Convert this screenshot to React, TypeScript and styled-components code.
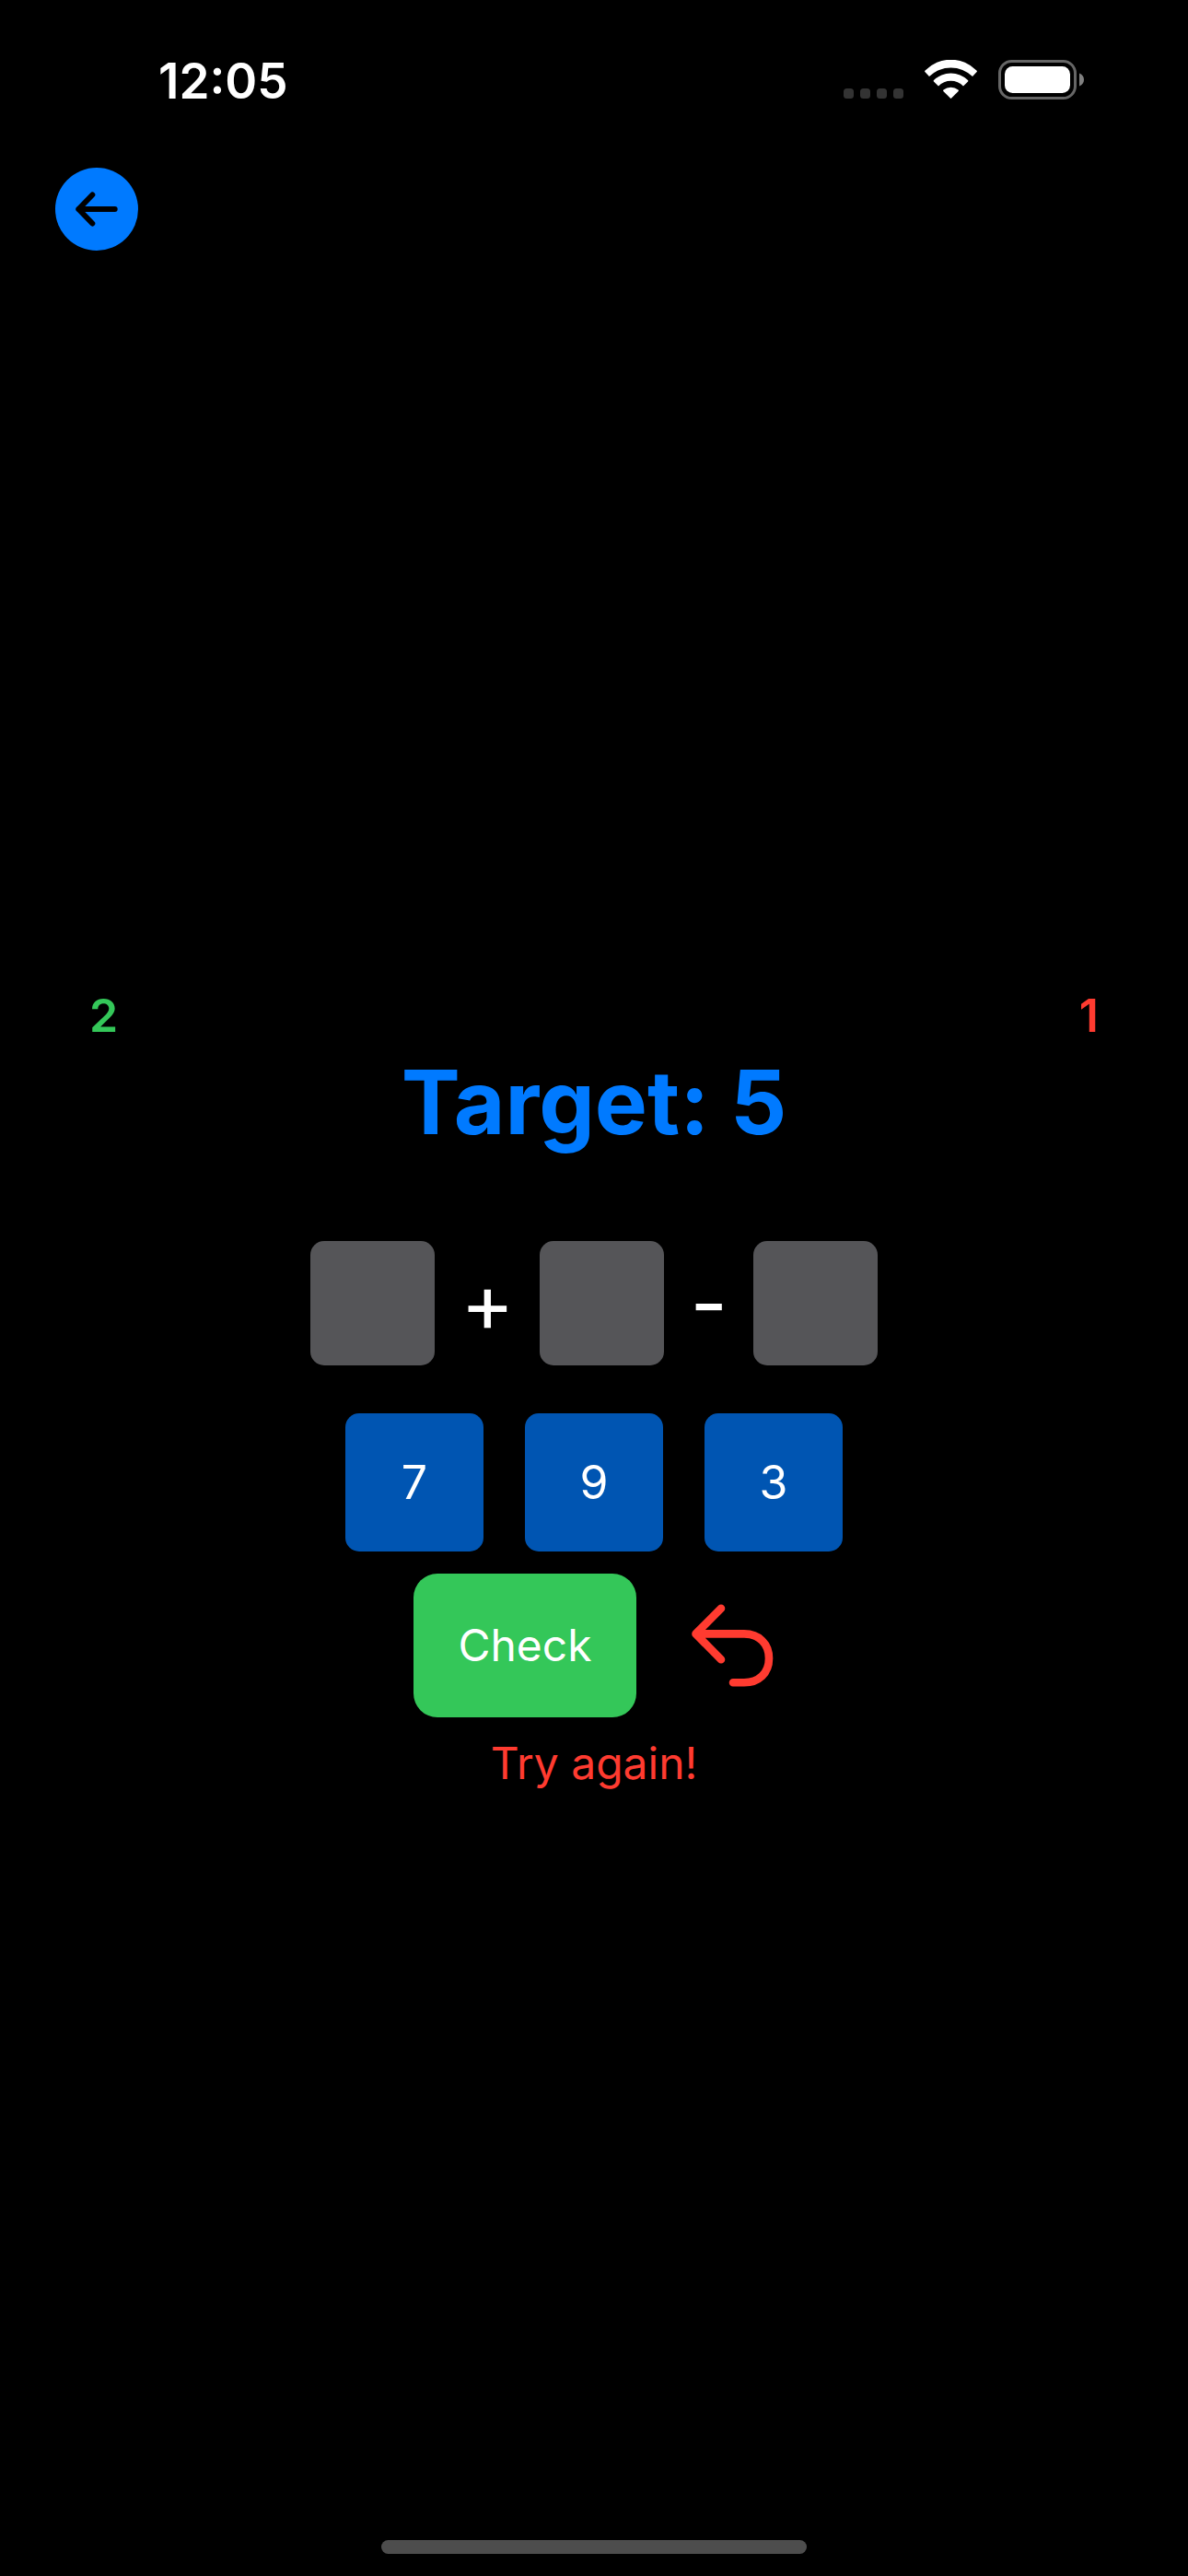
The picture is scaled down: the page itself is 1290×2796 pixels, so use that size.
import React, { useState } from "react";
import styled, { createGlobalStyle } from "styled-components";

const colors = {
  blue: "#007aff",
  green: "#34c759",
  red: "#ff3b30",
  slot: "#555558",
  tile: "#0055b2",
};

const GlobalStyle = createGlobalStyle`
  * {
    box-sizing: border-box;
  }
  body {
    margin: 0;
    background: #000;
    color: #fff;
    font-family: Inter, "Liberation Sans", sans-serif;
    font-size: 50px;
    line-height: 60px;
  }
  button {
    margin: 0;
    padding: 0;
    border: 0;
    background: none;
    color: inherit;
    font: inherit;
    cursor: pointer;
  }
  svg {
    display: block;
  }
`;

const Screen = styled.div`
  display: flex;
  flex-direction: column;
  min-height: 100vh;
`;

const StatusBar = styled.div`
  display: flex;
  align-items: flex-start;
  justify-content: space-between;
  padding: 58px 112px 0 172px;
`;

const Clock = styled.time`
  font-size: 53px;
  font-weight: 600;
`;

const StatusIcons = styled.div`
  display: flex;
  align-items: center;
  gap: 23px;
  padding-top: 7px;
`;

const Header = styled.header`
  display: flex;
  padding: 64px 60px 0;
`;

const BackButton = styled.button`
  width: 90px;
  height: 90px;
  border-radius: 50%;
  background: ${colors.blue};
`;

const Game = styled.main`
  flex: 1;
  display: flex;
  flex-direction: column;
  align-items: center;
  justify-content: center;
`;

const Scores = styled.div`
  display: flex;
  justify-content: space-between;
  align-self: stretch;
  padding: 0 97px;
`;

const Score = styled.span<{ $color: string }>`
  color: ${(p) => p.$color};
  font-weight: 600;
`;

const Target = styled.h1`
  margin: 4px 0 0;
  color: ${colors.blue};
  font-size: 96px;
  font-weight: 700;
  line-height: 120px;
`;

const Row = styled.div<{ $gap: number; $top: number }>`
  display: flex;
  align-items: center;
  gap: ${(p) => p.$gap}px;
  margin-top: ${(p) => p.$top}px;
`;

const Slot = styled.button`
  width: 135px;
  height: 135px;
  border-radius: 15px;
  background: ${colors.slot};
`;

const Operator = styled.span`
  font-size: 88px;
  line-height: 100px;
`;

const Tile = styled.button`
  width: 150px;
  height: 150px;
  border-radius: 15px;
  background: ${colors.tile};
`;

const CheckButton = styled.button`
  padding: 48px;
  border-radius: 26px;
  background: ${colors.green};
  font-size: 48px;
`;

const UndoButton = styled.button`
  width: 90px;
  height: 90px;
`;

const Message = styled.p`
  margin: 20px 0 0;
  color: ${colors.red};
  font-size: 48px;
`;

const Footer = styled.footer`
  display: flex;
  justify-content: center;
  padding: 14px 0 24px;
`;

const HomeIndicator = styled.div`
  width: 462px;
  height: 15px;
  border-radius: 8px;
  background: #4d4d4d;
`;

const SignalIcon = () => (
  <svg width="65" height="43" viewBox="0 0 65 43" fill="#333" aria-hidden="true">
    {[0, 18, 36, 54].map((x) => (
      <rect key={x} x={x} y="31" width="11" height="11" rx="3.5" />
    ))}
  </svg>
);

const WifiIcon = () => (
  <svg width="57" height="43" viewBox="0 0 57 43" fill="#fff" aria-hidden="true">
    <path d="M0.6 13.3Q-0.4 12.5 0.6 11.6A38.7 38.7 0 0 1 56.4 11.6Q57.4 12.5 56.4 13.3L52 18A33.8 33.8 0 0 0 5 18Z" />
    <path d="M9.9 23.4Q9.3 22.7 10 22A26.6 26.6 0 0 1 47 22Q47.7 22.7 47.1 23.4L42 28.5A19 19 0 0 0 15 28.5Z" />
    <path d="M20.3 33.9Q19.7 33.2 20.5 32.5A12.6 12.6 0 0 1 36.5 32.5Q37.3 33.2 36.7 33.9L29.1 41.6Q28.5 42.2 27.9 41.6Z" />
  </svg>
);

const BatteryIcon = () => (
  <svg width="94" height="43" viewBox="0 0 94 43" aria-hidden="true">
    <rect x="1.5" y="1.5" width="82" height="40" rx="13" fill="none" stroke="#666" strokeWidth="3" />
    <rect x="7" y="7" width="71" height="29" rx="8.5" fill="#fff" />
    <path d="M88 14.5C91.5 16 93 18.5 93 21.5S91.5 27 88 28.5Z" fill="#808080" />
  </svg>
);

const BackIcon = () => (
  <svg
    width="90"
    height="90"
    viewBox="0 0 90 90"
    fill="none"
    stroke="#000"
    strokeWidth="6"
    strokeLinecap="round"
    strokeLinejoin="round"
    aria-hidden="true"
  >
    <path d="M40.3 29.5L25.3 45L40.3 60.5M25.3 45H64.7" />
  </svg>
);

const UndoIcon = () => (
  <svg
    width="90"
    height="90"
    viewBox="0 0 90 90"
    fill="none"
    stroke={colors.red}
    strokeWidth="8.6"
    strokeLinecap="round"
    strokeLinejoin="round"
    aria-hidden="true"
  >
    <path d="M32 4.7L4.5 32.4L32 60.3M4.5 32.4H57C73 32.4 84 43 84 59S73 85.3 57 85.3H45" />
  </svg>
);

const NUMBERS = [7, 9, 3];
const OPERATORS = ["+", "-"];

export default function App() {
  const [slots, setSlots] = useState<(number | null)[]>([null, null, null]);
  const [message, setMessage] = useState("Try again!");

  const place = (value: number) => {
    const free = slots.indexOf(null);
    if (free < 0 || slots.includes(value)) return;
    setSlots(slots.map((s, i) => (i === free ? value : s)));
  };

  const clear = (index: number) => setSlots(slots.map((s, i) => (i === index ? null : s)));

  const check = () => {
    const [a, b, c] = slots;
    const solved = a !== null && b !== null && c !== null && a + b - c === 5;
    setMessage(solved ? "Correct!" : "Try again!");
  };

  return (
    <Screen>
      <GlobalStyle />
      <StatusBar>
        <Clock>12:05</Clock>
        <StatusIcons>
          <SignalIcon />
          <WifiIcon />
          <BatteryIcon />
        </StatusIcons>
      </StatusBar>
      <Header>
        <BackButton type="button" aria-label="Back">
          <BackIcon />
        </BackButton>
      </Header>
      <Game>
        <Scores>
          <Score $color={colors.green}>2</Score>
          <Score $color={colors.red}>1</Score>
        </Scores>
        <Target>Target: 5</Target>
        <Row $gap={28} $top={91}>
          {slots.map((value, i) => (
            <React.Fragment key={i}>
              {i > 0 && <Operator>{OPERATORS[i - 1]}</Operator>}
              <Slot type="button" aria-label={`Slot ${i + 1}`} onClick={() => clear(i)}>
                {value}
              </Slot>
            </React.Fragment>
          ))}
        </Row>
        <Row $gap={45} $top={52}>
          {NUMBERS.map((n) => (
            <Tile key={n} type="button" onClick={() => place(n)}>
              {n}
            </Tile>
          ))}
        </Row>
        <Row $gap={60} $top={24}>
          <CheckButton type="button" onClick={check}>
            Check
          </CheckButton>
          <UndoButton type="button" aria-label="Undo" onClick={() => setSlots([null, null, null])}>
            <UndoIcon />
          </UndoButton>
        </Row>
        <Message role="status">{message}</Message>
      </Game>
      <Footer>
        <HomeIndicator />
      </Footer>
    </Screen>
  );
}
